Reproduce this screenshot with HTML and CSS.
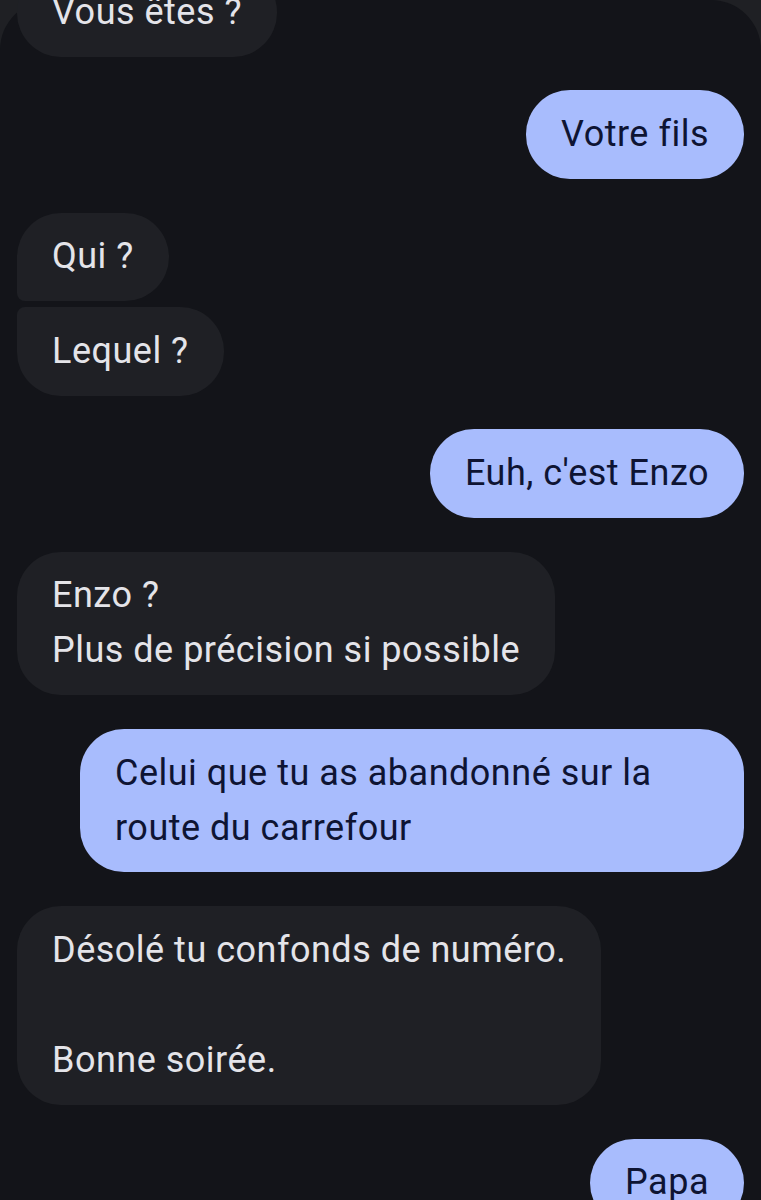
FILE: index.html
```html
<!DOCTYPE html>
<html lang="fr">
<head>
  <meta charset="UTF-8">
  <meta name="viewport" content="width=device-width, initial-scale=1.0">
  <title>Messages</title>
  <link rel="stylesheet" href="styles.css">
</head>
<body>
  <div class="chat">
    <div class="msg recu premier">Vous êtes ?</div>
    <div class="msg envoye">Votre fils</div>
    <div class="msg recu haut">Qui ?</div>
    <div class="msg recu bas suite">Lequel ?</div>
    <div class="msg envoye">Euh, c'est Enzo</div>
    <div class="msg recu">Enzo ?<br>Plus de précision si possible</div>
    <div class="msg envoye">Celui que tu as abandonné sur la route du carrefour</div>
    <div class="msg recu">Désolé tu confonds de numéro.<br><br>Bonne soirée.</div>
    <div class="msg envoye">Papa</div>
  </div>
</body>
</html>
```

FILE: styles.css
```css
body {
  margin: 0;
  background-color: #1f2024;
  font-family: Roboto, "Noto Sans", sans-serif;
}

.chat {
  display: flex;
  flex-direction: column;
  background-color: #131419;
  border-radius: 50px 50px 0 0;
  min-height: 1200px;
  padding: 0 17px;
}

.msg {
  max-width: 594px;
  padding: 16.75px 35px;
  font-size: 36px;
  line-height: 55px;
  letter-spacing: 0.5px;
  border-radius: 44px;
  margin-top: 33.8px;
}

.premier {
  margin-top: -32px;
}

.recu {
  align-self: flex-start;
  background-color: #1f2025;
  color: #e4e4e9;
}

.envoye {
  align-self: flex-end;
  background-color: #a8bcfd;
  color: #0e1433;
}

.haut {
  border-bottom-left-radius: 8px;
}

.bas {
  border-top-left-radius: 8px;
}

.suite {
  margin-top: 6px;
}
```
